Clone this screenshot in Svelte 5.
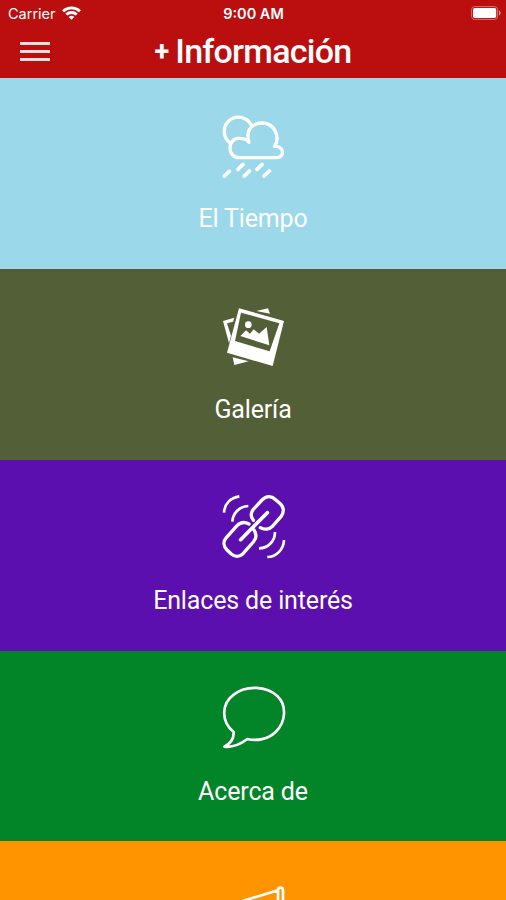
<script>
  let title = "Información";

  let sections = [
    { id: "weather", label: "El Tiempo", color: "#9bd9ea" },
    { id: "gallery", label: "Galería", color: "#535f36" },
    { id: "links", label: "Enlaces de interés", color: "#5a0fae" },
    { id: "about", label: "Acerca de", color: "#028428" },
    { id: "news", label: "", color: "#ff9300" },
  ];
</script>

<div class="screen">
  <header>
    <div class="status-bar">
      <div class="carrier">
        <span>Carrier</span>
        <svg class="wifi" viewBox="0 0 19 14" fill="none" stroke="#fff" stroke-width="2.9">
          <path d="M1.1 5.2c4.7-4.4 12.1-4.4 16.8 0" />
          <path d="M4.3 8.5c2.9-2.7 7.5-2.7 10.4 0" />
          <path d="M9.5 13.8L6.7 10.9c1.7-1.4 3.9-1.4 5.6 0z" fill="#fff" stroke="none" />
        </svg>
      </div>
      <span class="time">9:00 AM</span>
      <svg class="battery" viewBox="0 0 30 14">
        <rect x=".6" y=".6" width="26" height="12.8" rx="3" fill="none" stroke="#d96f6f" />
        <rect x="2" y="2" width="23.2" height="10" rx="1.8" fill="#fff" />
        <path d="M28 4.6c2 .8 2 4 0 4.8z" fill="#e69b9b" />
      </svg>
    </div>
    <div class="nav-bar">
      <button class="menu" aria-label="Menú">
        <span></span>
        <span></span>
        <span></span>
      </button>
      <h1><span class="plus">+</span><span class="name">{title}</span></h1>
    </div>
  </header>

  <main>
    {#each sections as section}
      <a href="#{section.id}" class="tile" style="background: {section.color}">
        <svg class="icon" viewBox="0 0 240 240">
          {#if section.id === "weather"}
            <g fill="none" stroke="#fff" stroke-width="10" stroke-linecap="round" stroke-linejoin="round">
              <path d="M52 111C30 96 28 64 46 46c20-21 58-15 69 13" />
              <path d="M108 109C95 70 122 50 149 51c35 2 54 40 36 70 29-2 31 34 6 34H78c-37 0-35-58-1-58 14 0 26 3 31 12z" />
              <path stroke-width="11" d="M34 210l15-14M75 190l15-15M94 210l15-15M132 190l15-15M153 210l16-15" />
            </g>
          {:else if section.id === "gallery"}
            <g transform="translate(0 10)" fill="#fff">
              <path d="M130 32l35-8 6 16zM30 62l34-10-4 12-18 5 12 37-6 23z" />
              <path d="M59 171l48 12-43 11z" />
              <path fill-rule="evenodd" d="M78 24l135 38-34 135L42 157zM84 37L66 122l104 31 29-84z" />
              <circle cx="106" cy="73" r="10" />
              <path d="M82 107l17-17 12 10 11-13 16 13 23-20 8 55z" />
            </g>
          {:else if section.id === "links"}
            <g fill="none" stroke="#fff">
              <g stroke-width="10" stroke-linecap="round" stroke-linejoin="round">
                <path d="M121 100c-8-11-9-22 0-33l26-28c13-13 28-13 41-1l14 12c12 11 11 28 2 39l-26 29c-9 10-25 11-36 4" />
                <path d="M108 111c-13-7-27-4-36 5l-32 36c-11 12-8 27 2 37l13 12c12 10 25 8 35-1l31-35c9-10 10-24 2-36" />
                <path stroke-width="11" d="M83 158L163 77" />
              </g>
              <g stroke-width="8">
                <path d="M33 77c1-27 20-45 46-49M58 104c1-24 20-46 48-47" />
                <path d="M186 135c0 27-20 49-48 49M213 159c-1 27-22 51-50 51" />
              </g>
            </g>
          {:else if section.id === "about"}
            <path
              transform="translate(0 4)"
              d="M62 158C24 128 24 73 63 45c37-28 98-25 130 5 30 29 25 79-5 108-23 22-57 28-85 21-21 16-43 26-69 23 16-8 29-23 28-44z"
              fill="none" stroke="#fff" stroke-width="8" stroke-linejoin="round" />
          {:else}
            <g fill="none" stroke="#fff" stroke-width="8" stroke-linejoin="round">
              <path d="M195 64L62 104H48c-22 0-22 65 0 65h14l133 35z" />
              <path d="M195 64c0-11 15-11 15 0v140c0 11-15 11-15 0" />
            </g>
          {/if}
        </svg>
        {#if section.label}
          <span class="label">{section.label}</span>
        {/if}
      </a>
    {/each}
  </main>
</div>

<style>
  :global(body) {
    background: #ff9300;
  }

  .screen {
    height: 900px;
    overflow: hidden;
    color: #fff;
    font-family: Roboto, sans-serif;
  }

  header {
    box-sizing: border-box;
    height: 78.2px;
    background: #bb0f0f;
  }

  .status-bar {
    display: grid;
    grid-template-columns: 1fr auto 1fr;
    align-items: center;
    height: 26px;
    padding: 0 5px 0 8px;
    font-family: Inter, sans-serif;
    font-size: 14.5px;
  }

  .carrier {
    display: flex;
    align-items: center;
    gap: 6px;
  }

  .wifi {
    width: 19px;
    height: 14px;
  }

  .time {
    margin-right: 2px;
    font-weight: 600;
  }

  .battery {
    justify-self: end;
    width: 30px;
    height: 14px;
  }

  .nav-bar {
    display: grid;
    grid-template-columns: 50px 1fr 50px;
    align-items: center;
    height: 51px;
  }

  .menu {
    display: flex;
    flex-direction: column;
    gap: 5.6px;
    width: 50px;
    padding: 0 0 0 20px;
    border: 0;
    background: none;
  }

  .menu span {
    width: 30px;
    height: 2.4px;
    background: #f7dddd;
  }

  h1 {
    display: flex;
    align-items: center;
    justify-content: center;
    gap: 6px;
    margin: 0;
    font-size: 34px;
    font-weight: 500;
    line-height: 46px;
  }

  .plus {
    font-size: 27px;
    font-weight: 700;
  }

  .name {
    margin-top: -2px;
    letter-spacing: -0.75px;
  }

  .tile {
    display: flex;
    flex-direction: column;
    align-items: center;
    box-sizing: border-box;
    height: 190.8px;
    padding-top: 27.7px;
    color: #fff;
    text-decoration: none;
  }

  .icon {
    flex: none;
    width: 80px;
    height: 80px;
  }

  .label {
    margin-top: 17.3px;
    font-size: 25px;
    line-height: 32px;
    letter-spacing: -0.15px;
  }
</style>
